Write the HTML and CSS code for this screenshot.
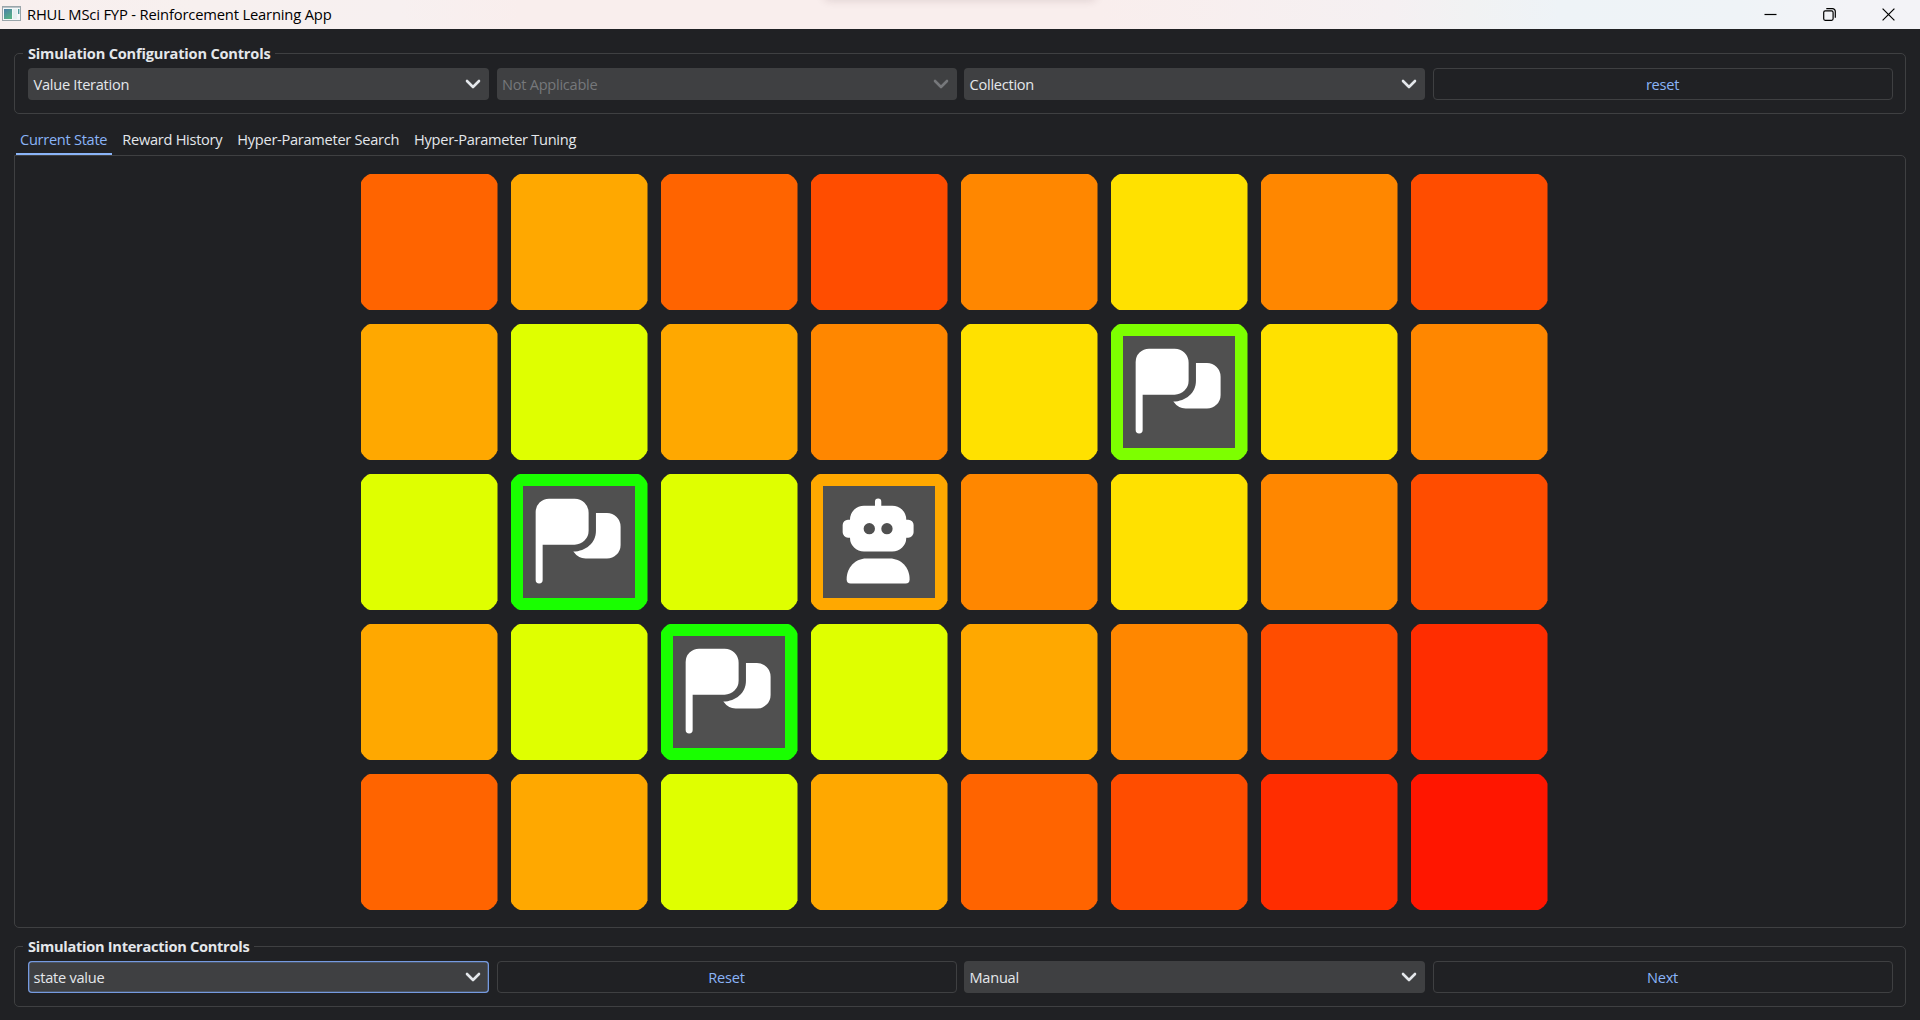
FILE: index.html
```html
<!DOCTYPE html>
<html lang="en">
<head>
<meta charset="utf-8">
<title>RHUL MSci FYP - Reinforcement Learning App</title>
<link rel="stylesheet" href="styles.css">
</head>
<body>
<svg class="defs" width="0" height="0">
  <symbol id="chevron" viewBox="0 0 16 10"><path d="M2 2l6 6 6-6" fill="none" stroke="currentColor" stroke-width="2.6" stroke-linecap="round" stroke-linejoin="round"/></symbol>
  <symbol id="flag" viewBox="0 0 335 335"><path d="M38 282V78a40 40 0 0 1 40-40H155a42 42 0 0 1 42 42V134a42 42 0 0 1-42 42H59V282a10.5 10.5 0 0 1-21 0z"/><path d="M219 81H252a41 41 0 0 1 41 41V177a41 41 0 0 1-41 41H188q-22 0-37-21c38-2 68-26 68-63z"/></symbol>
  <symbol id="robot" viewBox="0 0 335 335"><path fill-rule="evenodd" d="M156 59V47a9.500 9.500 0 0 1 19 0V59H208a42 42 0 0 1 42 42h6a16 16 0 0 1 16 16v22a16 16 0 0 1-16 16h-6a42 42 0 0 1-42 42H123a42 42 0 0 1-42-42h-6a16 16 0 0 1-16-16V117a16 16 0 0 1 16-16h6a42 42 0 0 1 42-42zM156 128a17 17 0 1 0-34 0 17 17 0 0 0 34 0zM209 128a17 17 0 1 0-34 0 17 17 0 0 0 34 0z"/><path d="M71 280c0-36 28-62 58-62h72c32 0 59 26 59 62q0 13-12 13H83q-12 0-12-13z"/></symbol>
</svg>

<header class="titlebar">
  <svg class="app-icon" width="19" height="15" viewBox="0 0 19 15"><defs><linearGradient id="screen" x1="0" y1="0" x2="0.6" y2="1"><stop offset="0" stop-color="#4a7fa8"/><stop offset="1" stop-color="#55b086"/></linearGradient></defs><rect x=".5" y=".5" width="18" height="14" fill="#f4f7f8" stroke="#9aa5aa"/><path d="M1 1.500h17" stroke="#b9c3c8"/><rect x="2" y="3" width="8" height="10" fill="url(#screen)"/><rect x="11" y="3" width="4" height="10" fill="#e4eff0"/><path d="M16.700 3v5" stroke="#4f9a9d" stroke-width="1.400"/></svg>
  <h1 class="title">RHUL MSci FYP - Reinforcement Learning App</h1>
  <div class="window-buttons">
    <svg width="13" height="13" viewBox="0 0 13 13"><path d="M.5 6.500h12"/></svg>
    <svg width="13" height="13" viewBox="0 0 13 13"><rect x=".7" y="2.900" width="9.400" height="9.400" rx="1.500"/><path d="M3.300.7h6.200a2.800 2.800 0 0 1 2.800 2.800v6.200"/></svg>
    <svg width="13" height="13" viewBox="0 0 13 13"><path d="M.6.6l11.800 11.800M12.400.6L.6 12.400"/></svg>
  </div>
  <div class="snap-shadow"></div>
</header>

<main class="content">
  <fieldset class="group">
    <legend>Simulation Configuration Controls</legend>
    <div class="controls">
      <div class="combo"><span>Value Iteration</span><svg class="chevron"><use href="#chevron"/></svg></div>
      <div class="combo disabled"><span>Not Applicable</span><svg class="chevron"><use href="#chevron"/></svg></div>
      <div class="combo"><span>Collection</span><svg class="chevron"><use href="#chevron"/></svg></div>
      <button class="button">reset</button>
    </div>
  </fieldset>

  <nav class="tabs">
    <a class="tab active">Current State</a>
    <a class="tab">Reward History</a>
    <a class="tab">Hyper-Parameter Search</a>
    <a class="tab">Hyper-Parameter Tuning</a>
  </nav>

  <section class="pane">
    <div class="grid">
      <div class="cell v3"></div><div class="cell v5"></div><div class="cell v3"></div><div class="cell v2"></div><div class="cell v4"></div><div class="cell v6"></div><div class="cell v4"></div><div class="cell v2"></div>
      <div class="cell v5"></div><div class="cell v7"></div><div class="cell v5"></div><div class="cell v4"></div><div class="cell v6"></div><div class="cell v8"><svg class="token"><use href="#flag"/></svg></div><div class="cell v6"></div><div class="cell v4"></div>
      <div class="cell v7"></div><div class="cell v9"><svg class="token"><use href="#flag"/></svg></div><div class="cell v7"></div><div class="cell v5"><svg class="token"><use href="#robot"/></svg></div><div class="cell v4"></div><div class="cell v6"></div><div class="cell v4"></div><div class="cell v2"></div>
      <div class="cell v5"></div><div class="cell v7"></div><div class="cell v9"><svg class="token"><use href="#flag"/></svg></div><div class="cell v7"></div><div class="cell v5"></div><div class="cell v4"></div><div class="cell v2"></div><div class="cell v1"></div>
      <div class="cell v3"></div><div class="cell v5"></div><div class="cell v7"></div><div class="cell v5"></div><div class="cell v3"></div><div class="cell v2"></div><div class="cell v1"></div><div class="cell v0"></div>
    </div>
  </section>

  <fieldset class="group interaction">
    <legend>Simulation Interaction Controls</legend>
    <div class="controls">
      <div class="combo focused"><span>state value</span><svg class="chevron"><use href="#chevron"/></svg></div>
      <button class="button">Reset</button>
      <div class="combo"><span>Manual</span><svg class="chevron"><use href="#chevron"/></svg></div>
      <button class="button">Next</button>
    </div>
  </fieldset>
</main>
</body>
</html>
```
FILE: styles.css
```css
* { box-sizing: border-box; }

body {
  margin: 0;
  height: 1020px;
  display: flex;
  flex-direction: column;
  overflow: hidden;
  background: #202124;
  color: #e4e7eb;
  font: 14.6px/19px "Open Sans", "Noto Sans", sans-serif;
  letter-spacing: -0.26px;
}

.defs { position: absolute; }

/* Title bar */
.titlebar {
  position: relative;
  flex: none;
  height: 29px;
  padding: 0 25.400px 0 2px;
  display: flex;
  align-items: center;
  background: linear-gradient(90deg, #f8efee 0, #f7f0ef 200px, #f7f0f0 400px, #f9eeed 520px, #f9eeed 1100px, #f5f0f2 1390px, #f1f2f3 1470px, #eef3f7 1560px, #eff3f7 1740px, #f3f3f7 1850px, #f3f3f7 100%);
  color: #000;
}
.app-icon { margin-top: -2px; }
.title {
  margin: 0 0 0 6px;
  font-size: 14.750px;
  font-weight: 400;
  letter-spacing: -0.18px;
}
.window-buttons {
  margin-left: auto;
  display: flex;
  gap: 45.800px;
}
.window-buttons svg {
  fill: none;
  stroke: #000;
  stroke-width: 1.2;
}
.snap-shadow {
  position: absolute;
  left: 824px;
  top: -10px;
  width: 272px;
  height: 10px;
  border-radius: 8px;
  box-shadow: 0 0 10px rgba(60, 30, 40, .16);
}

.content {
  flex: 1;
  display: flex;
  flex-direction: column;
  padding: 15px 14px 13px;
}

/* Control groups */
.group {
  flex: none;
  min-width: 0;
  margin: 0;
  padding: 5px 12.500px 13px 13px;
  border: 1px solid #3f4042;
  border-radius: 5px;
}
.group legend {
  margin-left: -5px;
  padding: 0 5px 0 5px;
  font-weight: 700;
  letter-spacing: -0.2px;
}
.controls {
  display: grid;
  grid-template-columns: 461px 460px 461px 1fr;
  gap: 7.500px;
}
.combo,
.button {
  height: 32px;
  border-radius: 4px;
  display: flex;
  align-items: center;
}
.combo {
  justify-content: space-between;
  padding: 1px 8px 0 5.500px;
  background: #3f4042;
}
.combo.disabled { color: #76787b; }
.combo.focused { box-shadow: inset 0 0 0 1.3px #759ae0; }
.chevron {
  width: 16px;
  height: 10px;
  margin-top: -1px;
}
.button {
  justify-content: center;
  padding: 1px 0 0;
  border: 1px solid #3f4042;
  background: none;
  color: #8ab4f7;
  font: inherit;
  letter-spacing: inherit;
}

/* Tabs */
.tabs {
  height: 41px;
  flex: none;
  display: flex;
  align-items: flex-end;
  gap: 6.500px;
  padding-left: 2px;
}
.tab {
  height: 28px;
  padding: 3px 4.500px 0 4px;
  border-bottom: 2px solid transparent;
  letter-spacing: -0.28px;
}
.tab.active {
  color: #8ab4f7;
  border-color: #8ab4f7;
}

.pane {
  flex: 1;
  display: flex;
  justify-content: center;
  padding: 17.700px 12px 0 0;
  border: 1px solid #3f4042;
  border-radius: 0 5px 5px 5px;
}

/* State value grid */
.grid {
  display: grid;
  grid-template: repeat(5, 136.700px) / repeat(8, 137px);
  gap: 13.300px 13px;
}
.cell {
  display: grid;
  place-items: center;
  clip-path: polygon(
    10px 0, 7px 1.200px, 3.800px 3.800px, 1.200px 7px, 0 10px,
    0 calc(100% - 10px), 1.200px calc(100% - 7px), 3.800px calc(100% - 3.800px), 7px calc(100% - 1.200px), 10px 100%,
    calc(100% - 10px) 100%, calc(100% - 7px) calc(100% - 1.200px), calc(100% - 3.800px) calc(100% - 3.800px), calc(100% - 1.200px) calc(100% - 7px), 100% calc(100% - 10px),
    100% 10px, calc(100% - 1.200px) 7px, calc(100% - 3.800px) 3.800px, calc(100% - 7px) 1.200px, calc(100% - 10px) 0);
}
.token {
  width: 111.600px;
  height: 111.600px;
  background: #505050;
  fill: #fff;
}
.v0 { background: #ff1600; }
.v1 { background: #ff2d00; }
.v2 { background: #ff4d00; }
.v3 { background: #ff6400; }
.v4 { background: #ff8700; }
.v5 { background: #ffa800; }
.v6 { background: #ffe100; }
.v7 { background: #dfff00; }
.v8 { background: #7dff00; }
.v9 { background: #19ff00; }

.interaction { margin-top: 9px; }
.interaction legend { letter-spacing: -0.28px; }
```
